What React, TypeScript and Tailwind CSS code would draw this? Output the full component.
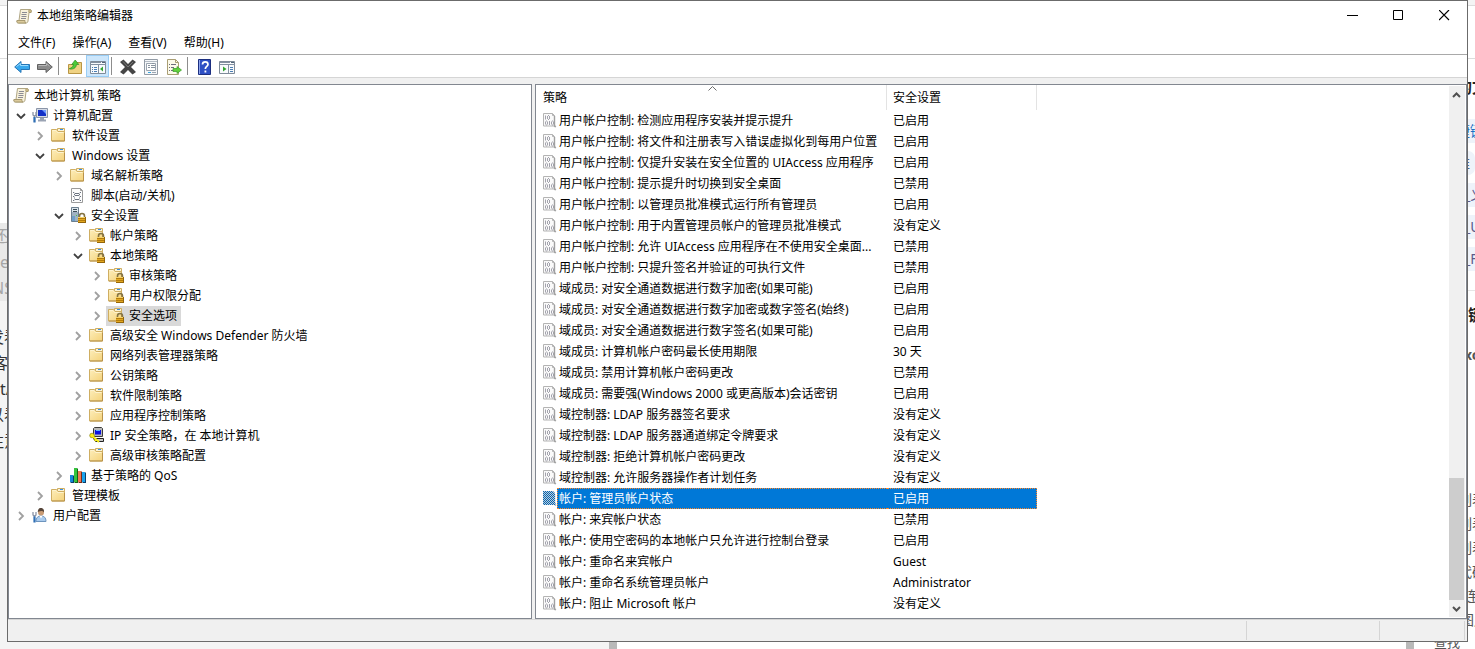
import React from 'react';
import clsx from 'clsx';

type IconName =
  | 'scroll'
  | 'computer'
  | 'folder'
  | 'script'
  | 'server'
  | 'lockFolder'
  | 'ipsec'
  | 'qos'
  | 'user';

interface TreeNode {
  label: string;
  icon: IconName;
  open?: boolean;
  leaf?: boolean;
  selected?: boolean;
  children?: TreeNode[];
}

const tree: TreeNode = {
  label: '本地计算机 策略',
  icon: 'scroll',
  leaf: true,
  children: [
    {
      label: '计算机配置',
      icon: 'computer',
      open: true,
      children: [
        { label: '软件设置', icon: 'folder' },
        {
          label: 'Windows 设置',
          icon: 'folder',
          open: true,
          children: [
            { label: '域名解析策略', icon: 'folder' },
            { label: '脚本(启动/关机)', icon: 'script', leaf: true },
            {
              label: '安全设置',
              icon: 'server',
              open: true,
              children: [
                { label: '帐户策略', icon: 'lockFolder' },
                {
                  label: '本地策略',
                  icon: 'lockFolder',
                  open: true,
                  children: [
                    { label: '审核策略', icon: 'lockFolder' },
                    { label: '用户权限分配', icon: 'lockFolder' },
                    { label: '安全选项', icon: 'lockFolder', selected: true },
                  ],
                },
                { label: '高级安全 Windows Defender 防火墙', icon: 'folder' },
                { label: '网络列表管理器策略', icon: 'folder', leaf: true },
                { label: '公钥策略', icon: 'folder' },
                { label: '软件限制策略', icon: 'folder' },
                { label: '应用程序控制策略', icon: 'folder' },
                { label: 'IP 安全策略，在 本地计算机', icon: 'ipsec' },
                { label: '高级审核策略配置', icon: 'folder' },
              ],
            },
            { label: '基于策略的 QoS', icon: 'qos' },
          ],
        },
        { label: '管理模板', icon: 'folder' },
      ],
    },
    { label: '用户配置', icon: 'user' },
  ],
};

const policies: [string, string][] = [
  ['用户帐户控制: 检测应用程序安装并提示提升', '已启用'],
  ['用户帐户控制: 将文件和注册表写入错误虚拟化到每用户位置', '已启用'],
  ['用户帐户控制: 仅提升安装在安全位置的 UIAccess 应用程序', '已启用'],
  ['用户帐户控制: 提示提升时切换到安全桌面', '已禁用'],
  ['用户帐户控制: 以管理员批准模式运行所有管理员', '已启用'],
  ['用户帐户控制: 用于内置管理员帐户的管理员批准模式', '没有定义'],
  ['用户帐户控制: 允许 UIAccess 应用程序在不使用安全桌面...', '已禁用'],
  ['用户帐户控制: 只提升签名并验证的可执行文件', '已禁用'],
  ['域成员: 对安全通道数据进行数字加密(如果可能)', '已启用'],
  ['域成员: 对安全通道数据进行数字加密或数字签名(始终)', '已启用'],
  ['域成员: 对安全通道数据进行数字签名(如果可能)', '已启用'],
  ['域成员: 计算机帐户密码最长使用期限', '30 天'],
  ['域成员: 禁用计算机帐户密码更改', '已禁用'],
  ['域成员: 需要强(Windows 2000 或更高版本)会话密钥', '已启用'],
  ['域控制器: LDAP 服务器签名要求', '没有定义'],
  ['域控制器: LDAP 服务器通道绑定令牌要求', '没有定义'],
  ['域控制器: 拒绝计算机帐户密码更改', '没有定义'],
  ['域控制器: 允许服务器操作者计划任务', '没有定义'],
  ['帐户: 管理员帐户状态', '已启用'],
  ['帐户: 来宾帐户状态', '已禁用'],
  ['帐户: 使用空密码的本地帐户只允许进行控制台登录', '已启用'],
  ['帐户: 重命名来宾帐户', 'Guest'],
  ['帐户: 重命名系统管理员帐户', 'Administrator'],
  ['帐户: 阻止 Microsoft 帐户', '没有定义'],
];

const SELECTED_POLICY = 18;

const Svg: React.FC<{ children: React.ReactNode }> = ({ children }) => (
  <svg className="h-4 w-4 shrink-0" viewBox="0 0 16 16" fill="none" aria-hidden="true">
    {children}
  </svg>
);

const folderShape = (
  <>
    <path d="M6.500 1.500h7v4h-7z" fill="#fbf3d6" stroke="#cfae62" />
    <path d="M9 2.500h3" stroke="#3b8de0" />
    <path d="M.5 2.500h5l1.500 2h6.500v9.500H.5z" fill="url(#folderFill)" stroke="#cfae62" />
    <path d="M1.500 3.500h3.500l1.500 2h6" stroke="#fdf3cf" />
    <path d="M1 14h12.500V6" stroke="#b8924a" />
  </>
);

const padlock = (
  <>
    <path d="M9.500 10.500V9a2.500 2.500 0 0 1 5 0v1.500" stroke="#857443" strokeWidth="1.600" />
    <path d="M8 10h8v6H8z" fill="#e3a820" />
    <path d="M8 11.500h8M8 13.500h8" stroke="#b47c0c" />
    <path d="M8 10.500h8" stroke="#f7d468" />
    <path d="M15.500 10v6M8 15.500h8" stroke="#94660b" />
  </>
);

const nodeIcons: Record<IconName, React.ReactNode> = {
  scroll: (
    <>
      <path d="M4.500 1.500h9c1.500 0 2 1 1.500 3h-2l-1 8.500c-.2 1.500-1 2-2 2H2.500c-1.500 0-2-1-1.500-2.500h2z" fill="#f8f2dc" stroke="#b0a684" />
      <path d="M13 4.500c-.5-1.500-.2-3 1-3s1.500 1.500 1 3z" fill="#d9c48c" stroke="#a89a70" />
      <path d="M1 12.500h8c-.2 1.500.2 2.500 1 2.500H2.500C1.200 15 .8 14 1 12.500z" fill="#dccb9c" stroke="#a89a70" />
      <path d="M6 4.500h5M5.500 6.500h5M5.500 8.500h5M5 10.500h5" stroke="#8c8c94" />
    </>
  ),
  computer: (
    <>
      <path d="M4.500 1.500h11v9h-11z" fill="#d5dbe6" stroke="#8b95a8" />
      <path d="M6 3h8v6H6z" fill="#1230c8" />
      <path d="M10 3h4v4z" fill="#6f9bff" />
      <path d="M8 11h4v2H8z" fill="#9aa3b3" />
      <path d="M6 13.500h8" stroke="#9aa3b3" strokeWidth="2" />
      <path d="M1 5v3l1.500 1.500L4 8V5M2.500 9v6" stroke="#8b95a8" strokeWidth="1.300" />
      <path d="M2.500 10v5.500" stroke="#2f6fb5" strokeWidth="2.200" />
    </>
  ),
  folder: folderShape,
  script: (
    <>
      <path d="M1.500 1.500h9l2 2v12h-11z" fill="#fdfdfd" stroke="#9b9b9b" />
      <path d="M10.500 1.500v2h2" stroke="#9b9b9b" />
      <path d="M3 5.500h1l1 1h4l1-1h1M3 9.500h1l1-1h4l1 1h1M3 13.500h1l1-1h4l1 1h1M4 7.500h1M9 7.500h1M4 11h1M9 11h1" stroke="#6c7480" />
    </>
  ),
  server: (
    <>
      <path d="M1.500.5h7v14h-7z" fill="#9fb2c2" stroke="#6c7f8f" />
      <path d="M2 1h6v4H2z" fill="#dce6ec" />
      <path d="M3 2.500h4M3 4.500h4" stroke="#3c4b57" />
      <path d="M2 9h3v5H2z" fill="#6f9fc9" />
      <path d="M6 8.500h1" stroke="#41d141" />
      {padlock}
    </>
  ),
  lockFolder: (
    <>
      {folderShape}
      {padlock}
    </>
  ),
  ipsec: (
    <>
      <path d="M4.500 1.500l1-1h7l1 1v8h-9z" fill="#b9b9b9" stroke="#3b3b3b" />
      <path d="M6 3h6v4.500H6z" fill="#0b12e0" />
      <path d="M7 3.500h4" stroke="#5bb3ff" />
      <path d="M4.500 11.500h10v3h-8z" fill="#c9c9c9" stroke="#222" />
      <circle cx="3" cy="8.500" r="2.300" fill="#f9ee14" stroke="#7a7400" strokeWidth=".6" />
      <path d="M4 9.500l6 5.500M7 12l-1 2" stroke="#f9ee14" strokeWidth="1.800" />
    </>
  ),
  qos: (
    <>
      <path d="M0 8h3v7H0z" fill="#1687d9" />
      <path d="M3 8l1 1v7H1l-1-1h3z" fill="#0a3d69" />
      <path d="M4 1h3v14H4z" fill="#35c43c" />
      <path d="M7 1l1 1v14H5l-1-1h3z" fill="#126316" />
      <path d="M8 4h3v11H8z" fill="#ee7a55" />
      <path d="M11 4l1 1v11H9l-1-1h3z" fill="#7b2c16" />
      <path d="M12 5h3v10h-3z" fill="#1aa3ec" />
      <path d="M15 5l1 1v10h-3l-1-1h3z" fill="#0a3d69" />
    </>
  ),
  user: (
    <>
      <path d="M4 14.500c0-4 2-5.500 5-5.500s5 1.500 5 5.500z" fill="#a9cbee" stroke="#6d94bd" />
      <path d="M7.500 9L9 11.500 10.500 9z" fill="#fff" />
      <circle cx="9" cy="5.500" r="3" fill="#c99b74" />
      <path d="M5.800 5C6 1.500 7.500 1 9 1s3.500 1 3 4.500c-1-2-3-2-6.200-.5z" fill="#564539" />
      <path d="M1 5v3l1.500 1.500L4 8V5" stroke="#8b95a8" strokeWidth="1.300" />
      <path d="M2.500 9.500v6" stroke="#2f6fb5" strokeWidth="2.200" />
    </>
  ),
};

const DocIcon: React.FC<{ selected?: boolean }> = ({ selected }) => (
  <svg className="h-4 w-[14px] shrink-0" viewBox="0 0 14 16" fill="none" aria-hidden="true">
    <path d="M.5.5h9l2 2v9.500l1.500 2-2-1H.5z" fill="#fafafa" stroke="#b4b4b4" />
    <path d="M9.500.5v2h2" stroke="#b4b4b4" />
    <path
      d="M2.500 2.500v4M4.500 3v3M6.500 3v3M5 2.500h1M5 6.500h1M2.500 8.500v3M4.500 8.500v3M3 8h1M3 12h1M6.500 8v4M8.500 8.500v3M10.500 8.500v3M9 8h1M9 12h1"
      stroke="#a3a3ad"
    />
    <path d="M11.500 3v10l1 1" stroke="#a0a0a0" strokeWidth="1.400" />
    {selected && <path d="M0 0h10l2 2v10l1.500 2.500L11 14H0z" fill="url(#checker)" />}
  </svg>
);

const Chevron: React.FC<{ open?: boolean }> = ({ open }) => (
  <svg className="mr-px h-[10px] w-[10px]" viewBox="0 0 10 10" fill="none" aria-hidden="true">
    {open ? (
      <path d="M1 3l4 4 4-4" stroke="#404040" strokeWidth="1.800" />
    ) : (
      <path d="M3 1l4 4-4 4" stroke="#a0a0a0" strokeWidth="1.800" />
    )}
  </svg>
);

const TreeItem: React.FC<{ node: TreeNode; root?: boolean }> = ({ node, root }) => (
  <li>
    <div className="flex h-5 items-center">
      {!node.leaf && (
        <button
          type="button"
          className="-ml-[18px] flex h-5 w-[18px] items-center justify-center"
          aria-label={node.open ? '折叠' : '展开'}
        >
          <Chevron open={node.open} />
        </button>
      )}
      <span
        className={clsx(
          'flex h-5 items-center gap-[5px] whitespace-nowrap pl-[2px] pr-1',
          node.selected && 'bg-[#d9d9d9]'
        )}
      >
        <span className="pb-[2px]">
          <Svg>{nodeIcons[node.icon]}</Svg>
        </span>
        {node.label}
      </span>
    </div>
    {node.children && (root || node.open) && (
      <ul className="pl-[19px]">
        {node.children.map((child) => (
          <TreeItem key={child.label} node={child} />
        ))}
      </ul>
    )}
  </li>
);

const ToolButton: React.FC<{ label: string; active?: boolean; children: React.ReactNode }> = ({
  label,
  active,
  children,
}) => (
  <button
    type="button"
    aria-label={label}
    className={clsx(
      'flex h-[22px] w-[23px] items-center justify-center border pt-px',
      active ? 'border-[#99cdf5] bg-[#cce6fb]' : 'border-transparent'
    )}
  >
    <Svg>{children}</Svg>
  </button>
);

const ToolSeparator = () => (
  <span className="flex h-[18px] w-[7px] pl-[2px]">
    <span className="w-px bg-[#8d8d8d]" />
  </span>
);

const Toolbar = () => (
  <div className="flex h-[23px] shrink-0 items-center border-b border-[#d5d5d5] pl-[2px]">
    <ToolButton label="后退">
      <path d="M.7 8L7 2.500v3h8.500v5H7v3z" fill="#37a7ec" stroke="#2675b5" />
      <path d="M2.500 7.500L6.500 4.500v2H14" stroke="#9bdcff" />
    </ToolButton>
    <ToolButton label="前进">
      <path d="M15.300 8L9 2.500v3H.5v5H9v3z" fill="#8b8b8b" stroke="#606060" />
      <path d="M1.500 6.500h8v-2l3 2.500" stroke="#b8b8b8" />
    </ToolButton>
    <ToolSeparator />
    <ToolButton label="上一级">
      <path d="M1.500 5.500h5l1-2h7v11h-13z" fill="#efd283" stroke="#b99645" />
      <path d="M2.500 9.500c2-.5 3.500-1.500 4-4H4.700L8.200 1l3.600 4.500H9.500c-.4 3.500-3 5-7 4.500z" fill="#4ccb38" stroke="#2b8c22" strokeWidth=".7" />
    </ToolButton>
    <ToolButton label="显示/隐藏控制台树" active>
      <path d="M.5 2.500h15v12H.5z" fill="#f8fafc" stroke="#7f8b99" />
      <path d="M0 3.500h11M0 5.500h16M8.500 6v8" stroke="#8390a0" />
      <path d="M12 3.500h3" stroke="#526578" />
      <path d="M2 8.500h1M4 8.500h3M2 10.500h1M4 10.500h3M2 12.500h1M4 12.500h3" stroke="#4c7eb3" />
      <path d="M13 7.500v5L10 10z" fill="#32a632" />
    </ToolButton>
    <ToolSeparator />
    <ToolButton label="删除">
      <path d="M0 3l3.500-2.500L8 5l4.500-4.500L16 3l-5 5 5 5-3.500 2.500L8 11l-4.500 4.500L0 13l5-5z" fill="#454545" />
      <path d="M3 2.500L8 8l5-5" stroke="#777" />
    </ToolButton>
    <ToolButton label="属性">
      <path d="M1.500.5h13v15h-13z" fill="#f6f8fa" stroke="#929ba5" />
      <path d="M2 2.500h12" stroke="#b5bdc6" />
      <path d="M3.500 4.500h9v7h-9z" fill="#fff" stroke="#9ba5b0" />
      <path d="M5 6.500h2M5 8.500h2M8 6.500h4M8 8.500h4M9 4.500h2" stroke="#87939f" />
      <path d="M5 13.500h3" stroke="#38a6df" />
      <path d="M9 13.500h4" stroke="#9ba5b0" />
    </ToolButton>
    <ToolButton label="导出列表">
      <path d="M1.500.5h8l3 3v12h-11z" fill="#fdfaea" stroke="#a99e74" />
      <path d="M9.500.5v3h3" stroke="#a99e74" />
      <path d="M3 5.500h1M5 5.500h5M3 8.500h1M5 8.500h3M3 11.500h1M5 11.500h3" stroke="#6f6f7c" />
      <path d="M7 9.500h4v-2l4.500 3.500-4.500 3.500v-2H7z" fill="#62d13c" stroke="#369b27" strokeWidth=".7" />
    </ToolButton>
    <ToolSeparator />
    <ToolButton label="帮助">
      <path d="M2.500.5h12v15h-12z" fill="#2e4fc4" stroke="#1c2f80" />
      <path d="M3.500 1v14" stroke="#8da4ee" />
      <path d="M6.500 5.500c0-3.500 5.500-3.500 5.500 0 0 2-2.700 2-2.700 4.500" stroke="#fff" strokeWidth="1.700" />
      <path d="M8.500 11.500h1.800v2H8.500z" fill="#fff" />
    </ToolButton>
    <ToolButton label="显示/隐藏操作窗格">
      <path d="M.5 2.500h15v12H.5z" fill="#f8fafc" stroke="#7f8b99" />
      <path d="M0 3.500h11M0 5.500h16M9.500 6v8" stroke="#8390a0" />
      <path d="M12 3.500h3" stroke="#526578" />
      <path d="M11 8.500h3M11 10.500h3M11 12.500h3" stroke="#4c7eb3" />
      <path d="M4 7.500v5L7.500 10z" fill="#32a632" />
    </ToolButton>
  </div>
);

const TitleBar = () => (
  <header className="flex h-[30px] shrink-0 items-start">
    <div className="flex h-[30px] flex-1 items-center gap-[5px] pl-2">
      <Svg>{nodeIcons.scroll}</Svg>
      <h1>本地组策略编辑器</h1>
    </div>
    <button type="button" aria-label="最小化" className="flex h-[29px] w-[46px] items-center justify-center">
      <svg className="h-[11px] w-[11px]" viewBox="0 0 11 11" aria-hidden="true">
        <path d="M0 5.500h11" stroke="#000" />
      </svg>
    </button>
    <button type="button" aria-label="最大化" className="flex h-[29px] w-[46px] items-center justify-center">
      <svg className="h-[11px] w-[11px]" viewBox="0 0 11 11" fill="none" aria-hidden="true">
        <path d="M.5.5h9v9h-9z" stroke="#000" />
      </svg>
    </button>
    <button type="button" aria-label="关闭" className="flex h-[29px] w-[46px] items-center justify-center">
      <svg className="h-[11px] w-[11px]" viewBox="0 0 11 11" aria-hidden="true">
        <path d="M0 0l10 10M10 0L0 10" stroke="#000" strokeWidth="1.200" />
      </svg>
    </button>
  </header>
);

const PolicyTable = () => (
  <table className="w-[501px] table-fixed border-collapse text-left">
    <colgroup>
      <col className="w-[351px]" />
      <col className="w-[150px]" />
    </colgroup>
    <thead>
      <tr className="h-[25px]">
        <th className="p-0 font-normal">
          <div className="relative flex h-[25px] items-center border-r border-[#e3e3e3] pl-[7px]">
            策略
            <svg className="absolute left-[172px] top-[1px] h-[5px] w-[9px]" viewBox="0 0 9 5" fill="none" aria-hidden="true">
              <path d="M.5 4.500l4-4 4 4" stroke="#6b6b6b" />
            </svg>
          </div>
        </th>
        <th className="p-0 font-normal">
          <div className="flex h-[25px] items-center border-r border-[#e3e3e3] pl-[6px]">安全设置</div>
        </th>
      </tr>
    </thead>
    <tbody>
      {policies.map(([name, value], i) => {
        const selected = i === SELECTED_POLICY;
        return (
          <tr key={name} className="h-[21px]">
            <td className="p-0">
              <div className="flex h-[21px] items-center pl-[7px]">
                <DocIcon selected={selected} />
                <span
                  className={clsx(
                    'flex h-[21px] flex-1 items-center whitespace-nowrap border-y border-l border-dotted pl-px',
                    selected ? 'border-[#ff8728] bg-[#0078d7] text-white' : 'border-transparent'
                  )}
                >
                  {name}
                </span>
              </div>
            </td>
            <td className="p-0">
              <div
                className={clsx(
                  'flex h-[21px] items-center whitespace-nowrap border-y border-r border-dotted pl-[6px]',
                  selected ? 'border-[#ff8728] bg-[#0078d7] text-white' : 'border-transparent'
                )}
              >
                {value}
              </div>
            </td>
          </tr>
        );
      })}
    </tbody>
  </table>
);

const ScrollBar = () => (
  <div className="my-px mr-px flex w-4 shrink-0 flex-col bg-[#f0f0f0]">
    <button type="button" aria-label="向上滚动" className="flex h-[17px] items-center justify-center pr-px">
      <svg className="h-2 w-[9px]" viewBox="0 0 9 8" fill="none" aria-hidden="true">
        <path d="M1 6l3.500-3.500L8 6" stroke="#505050" strokeWidth="2" />
      </svg>
    </button>
    <div className="flex-[375]" />
    <div className="mr-px flex-[122] bg-[#cdcdcd]" />
    <button type="button" aria-label="向下滚动" className="flex h-[17px] items-center justify-center pr-px">
      <svg className="h-2 w-[9px]" viewBox="0 0 9 8" fill="none" aria-hidden="true">
        <path d="M1 2l3.500 3.500L8 2" stroke="#505050" strokeWidth="2" />
      </svg>
    </button>
  </div>
);

// Slivers of the web page that lies behind the window
const PageLeft = () => (
  <div className="w-[7px] shrink-0 overflow-hidden whitespace-nowrap bg-[#f4f4f4] text-base leading-[26px] text-[#333]">
    <div className="h-[6px] border-b border-[#dcdcdc]" />
    <div className="h-[53px] border-b border-[#dcdcdc] bg-white" />
    <div className="h-[164px] bg-white" />
    <div className="h-[78px] bg-[#e9e9e9] text-[#a6a6a6]">
      <p className="-ml-2">还</p>
      <p>e</p>
      <p className="-ml-2">NS</p>
    </div>
    <div className="h-[23px]" />
    <p className="-ml-3">发看</p>
    <p className="-ml-2">客户</p>
    <p>t/</p>
    <p className="-ml-3">以看</p>
    <p className="-ml-3">注意</p>
  </div>
);

const PageRight = () => (
  <div className="w-[7px] shrink-0 overflow-hidden whitespace-nowrap bg-white text-sm leading-6 text-[#555]">
    <div className="h-[6px] border-b border-[#dcdcdc] bg-[#f4f4f4]" />
    <div className="h-[53px] border-b border-[#dcdcdc]" />
    <div className="h-4" />
    <p className="-ml-3 text-base leading-6 font-bold text-[#222]">的文</p>
    <div className="h-5" />
    <div className="bg-[#eef3fa] text-[#1b6fc2]">
      <p className="-ml-3">捷键</p>
    </div>
    <div className="h-2" />
    <div className="rounded-r-full bg-[#eef3fa] text-[#44608a]">
      <p className="-ml-3">推</p>
    </div>
    <div className="h-2" />
    <div className="bg-[#eef3fa] text-[#5a5a8a]">
      <p className="-ml-1">_义</p>
    </div>
    <div className="h-2" />
    <div className="bg-[#eef3fa] text-[#5a5a8a]">
      <p className="-ml-1">_U</p>
    </div>
    <div className="h-2" />
    <div className="bg-[#eef3fa] text-[#5a5a8a]">
      <p className="-ml-1">_F</p>
    </div>
    <div className="h-5 border-b border-[#e6e6e6]" />
    <div className="h-3" />
    <p className="text-base leading-6 font-bold text-[#222]">键</p>
    <div className="h-4" />
    <p className="-ml-1 font-bold">xc</p>
    <div className="h-[121px]" />
    <p className="-ml-[10px]">列表</p>
    <p className="-ml-[10px]">列表</p>
    <p className="-ml-[10px]">列表</p>
    <p className="-ml-[10px]">代码</p>
    <p className="-ml-1">连接</p>
    <p className="-ml-2">图片</p>
  </div>
);

const PageBottom = () => (
  <div className="flex h-[7px] shrink-0 items-end overflow-hidden bg-white">
    <div className="h-[7px] w-[609px] bg-[#f4f4f4]" />
    <div className="h-[7px] w-2 bg-[#b9b9b9]" />
    <div className="flex-1" />
    <div className="h-[7px] w-2 bg-[#b9b9b9]" />
    <div className="w-[61px] pl-5 text-[13px] leading-[14px] text-[#555]">查找</div>
  </div>
);

export default function App() {
  return (
    <div className="flex h-screen flex-col overflow-hidden bg-white font-['Noto_Sans','Noto_Sans_CJK_SC',sans-serif] text-xs text-black">
      {/* Shared paint servers */}
      <svg className="absolute h-0 w-0" aria-hidden="true">
        <defs>
          <linearGradient id="folderFill" x1="0" y1="0" x2="1" y2="1">
            <stop offset="0" stopColor="#fdeebb" />
            <stop offset="1" stopColor="#f4d27a" />
          </linearGradient>
          <pattern id="checker" width="2" height="2" patternUnits="userSpaceOnUse">
            <path d="M0 0h2v2H0z" fill="#c4ccd4" />
            <path d="M0 0h1v1H0zM1 1h1v1H1z" fill="#0067b8" shapeRendering="crispEdges" />
          </pattern>
        </defs>
      </svg>

      <div className="flex min-h-0 flex-1">
        <PageLeft />
        <div className="flex min-w-0 flex-1 flex-col border border-[#6b6b6b] bg-white">
          <TitleBar />
          <nav className="flex h-6 shrink-0 items-center gap-px border-b border-[#a9a9a9] pl-[2px]">
            {['文件(F)', '操作(A)', '查看(V)', '帮助(H)'].map((item) => (
              <button key={item} type="button" className="px-2">
                {item}
              </button>
            ))}
          </nav>
          <Toolbar />

          <main className="flex min-h-0 flex-1 gap-[3px] bg-[#f0f0f0] pt-[6px]">
            <section className="w-[524px] shrink-0 overflow-hidden border border-[#828790] bg-white pl-[2px] pt-px">
              <ul>
                <TreeItem node={tree} root />
              </ul>
            </section>
            <section className="flex min-w-0 flex-1 border border-[#828790] bg-white">
              <div className="min-w-0 flex-1 overflow-hidden">
                <PolicyTable />
              </div>
              <ScrollBar />
            </section>
          </main>

          <footer className="flex h-[22px] shrink-0 justify-end border-t border-[#d5d5d5] bg-[#f0f0f0] py-px pr-[2px]">
            <div className="w-[133px] border-l border-[#d5d5d5]" />
            <div className="w-[86px] border-x border-[#d5d5d5]" />
          </footer>
        </div>
        <PageRight />
      </div>
      <PageBottom />
    </div>
  );
}
